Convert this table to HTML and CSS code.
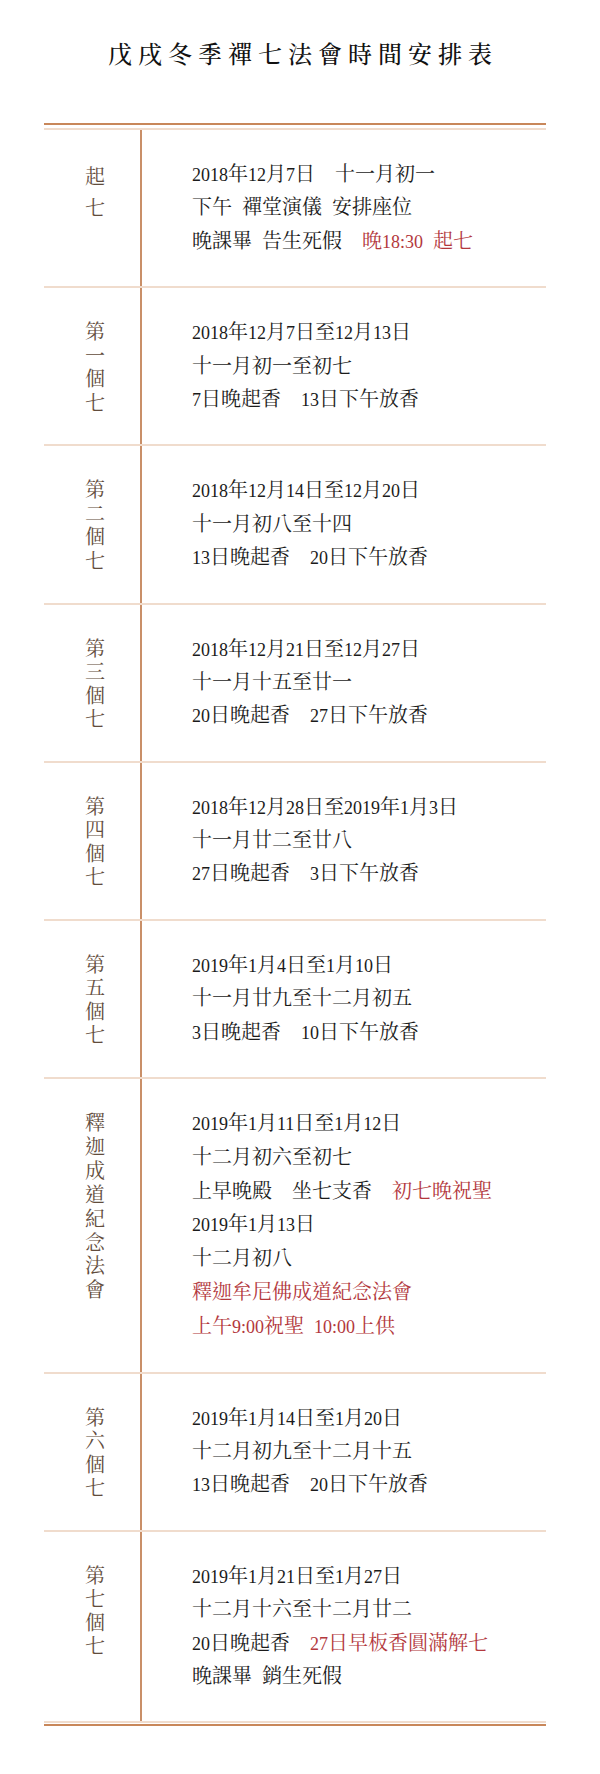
FILE: index.html
```html
<!DOCTYPE html>
<html lang="zh-Hant">
<head>
<meta charset="utf-8">
<title>戊戌冬季禪七法會時間安排表</title>
<link rel="stylesheet" href="styles.css">
</head>
<body>
<h1 class="title">戊戌冬季禪七法會時間安排表</h1>
<div class="schedule">
  <div class="rule-top"></div>
  <div class="row">
    <div class="label label-short"><span>起七</span></div>
    <div class="content">
      <p><span class="n">2018</span>年<span class="n">12</span>月<span class="n">7</span>日　十一月初一</p>
      <p>下午&ensp;禪堂演儀&ensp;安排座位</p>
      <p>晚課畢&ensp;告生死假　<span class="red">晚<span class="n">18:30</span>&ensp;起七</span></p>
    </div>
  </div>
  <div class="row">
    <div class="label"><span>第一個七</span></div>
    <div class="content">
      <p><span class="n">2018</span>年<span class="n">12</span>月<span class="n">7</span>日至<span class="n">12</span>月<span class="n">13</span>日</p>
      <p>十一月初一至初七</p>
      <p><span class="n">7</span>日晚起香　<span class="n">13</span>日下午放香</p>
    </div>
  </div>
  <div class="row">
    <div class="label"><span>第二個七</span></div>
    <div class="content">
      <p><span class="n">2018</span>年<span class="n">12</span>月<span class="n">14</span>日至<span class="n">12</span>月<span class="n">20</span>日</p>
      <p>十一月初八至十四</p>
      <p><span class="n">13</span>日晚起香　<span class="n">20</span>日下午放香</p>
    </div>
  </div>
  <div class="row">
    <div class="label"><span>第三個七</span></div>
    <div class="content">
      <p><span class="n">2018</span>年<span class="n">12</span>月<span class="n">21</span>日至<span class="n">12</span>月<span class="n">27</span>日</p>
      <p>十一月十五至廿一</p>
      <p><span class="n">20</span>日晚起香　<span class="n">27</span>日下午放香</p>
    </div>
  </div>
  <div class="row">
    <div class="label"><span>第四個七</span></div>
    <div class="content">
      <p><span class="n">2018</span>年<span class="n">12</span>月<span class="n">28</span>日至<span class="n">2019</span>年<span class="n">1</span>月<span class="n">3</span>日</p>
      <p>十一月廿二至廿八</p>
      <p><span class="n">27</span>日晚起香　<span class="n">3</span>日下午放香</p>
    </div>
  </div>
  <div class="row">
    <div class="label"><span>第五個七</span></div>
    <div class="content">
      <p><span class="n">2019</span>年<span class="n">1</span>月<span class="n">4</span>日至<span class="n">1</span>月<span class="n">10</span>日</p>
      <p>十一月廿九至十二月初五</p>
      <p><span class="n">3</span>日晚起香　<span class="n">10</span>日下午放香</p>
    </div>
  </div>
  <div class="row">
    <div class="label label-long"><span>釋迦成道紀念法會</span></div>
    <div class="content content-long">
      <p><span class="n">2019</span>年<span class="n">1</span>月<span class="n">11</span>日至<span class="n">1</span>月<span class="n">12</span>日</p>
      <p>十二月初六至初七</p>
      <p>上早晚殿　坐七支香　<span class="red">初七晚祝聖</span></p>
      <p><span class="n">2019</span>年<span class="n">1</span>月<span class="n">13</span>日</p>
      <p>十二月初八</p>
      <p class="red">釋迦牟尼佛成道紀念法會</p>
      <p class="red">上午<span class="n">9:00</span>祝聖&ensp;<span class="n">10:00</span>上供</p>
    </div>
  </div>
  <div class="row">
    <div class="label"><span>第六個七</span></div>
    <div class="content">
      <p><span class="n">2019</span>年<span class="n">1</span>月<span class="n">14</span>日至<span class="n">1</span>月<span class="n">20</span>日</p>
      <p>十二月初九至十二月十五</p>
      <p><span class="n">13</span>日晚起香　<span class="n">20</span>日下午放香</p>
    </div>
  </div>
  <div class="row">
    <div class="label"><span>第七個七</span></div>
    <div class="content">
      <p><span class="n">2019</span>年<span class="n">1</span>月<span class="n">21</span>日至<span class="n">1</span>月<span class="n">27</span>日</p>
      <p>十二月十六至十二月廿二</p>
      <p><span class="n">20</span>日晚起香　<span class="red"><span class="n">27</span>日早板香圓滿解七</span></p>
      <p>晚課畢&ensp;銷生死假</p>
    </div>
  </div>
  <div class="rule-bottom"></div>
</div>
</body>
</html>
```
FILE: styles.css
```css
html, body {
  margin: 0;
  padding: 0;
  background: #ffffff;
}

body {
  font-family: "Liberation Serif", "Noto Serif CJK TC", "Noto Sans CJK TC", serif;
  color: #1b1b1b;
}

.title {
  margin: 0 0 53px 0;
  padding: 36px 0 0 6px;
  height: 34px;
  font-family: "Noto Serif CJK TC", "Noto Sans CJK TC", serif;
  font-size: 24px;
  line-height: 34px;
  font-weight: 500;
  letter-spacing: 6px;
  text-align: center;
  color: #111111;
}

.schedule {
  width: 502px;
  margin-left: 44px;
}

.rule-top {
  height: 3px;
  border-top: 2px solid #c8875a;
  border-bottom: 2px solid #f0dccd;
}

.rule-bottom {
  height: 1px;
  border-top: 2px solid #f0dccd;
  border-bottom: 2px solid #c8875a;
}

.row {
  display: grid;
  grid-template-columns: 98px 1fr;
  border-top: 2px solid #f0dccd;
}

.rule-top + .row {
  border-top: 0;
}

.label {
  border-right: 2px solid #c98f68;
  padding: 31px 0 28px 6px;
  font-family: "Noto Serif CJK TC", "Noto Sans CJK TC", serif;
  font-size: 20px;
  line-height: 23.5px;
  color: #624c3c;
}

.label span {
  display: block;
  width: 1em;
  margin: 0 auto;
}

.label-short {
  line-height: 31px;
  padding-top: 30px;
}

.label-long {
  line-height: 23.9px;
}

.content {
  padding: 28px 0 28px 50px;
  font-size: 20px;
  line-height: 33.4px;
}

.content p {
  margin: 0;
  height: 33.4px;
  white-space: nowrap;
}

.content-long p {
  height: 33.8px;
  line-height: 33.8px;
}

.n {
  font-family: "Liberation Serif", serif;
  font-size: 18px;
  line-height: 1;
}

.red {
  color: #b3383d;
}
```
